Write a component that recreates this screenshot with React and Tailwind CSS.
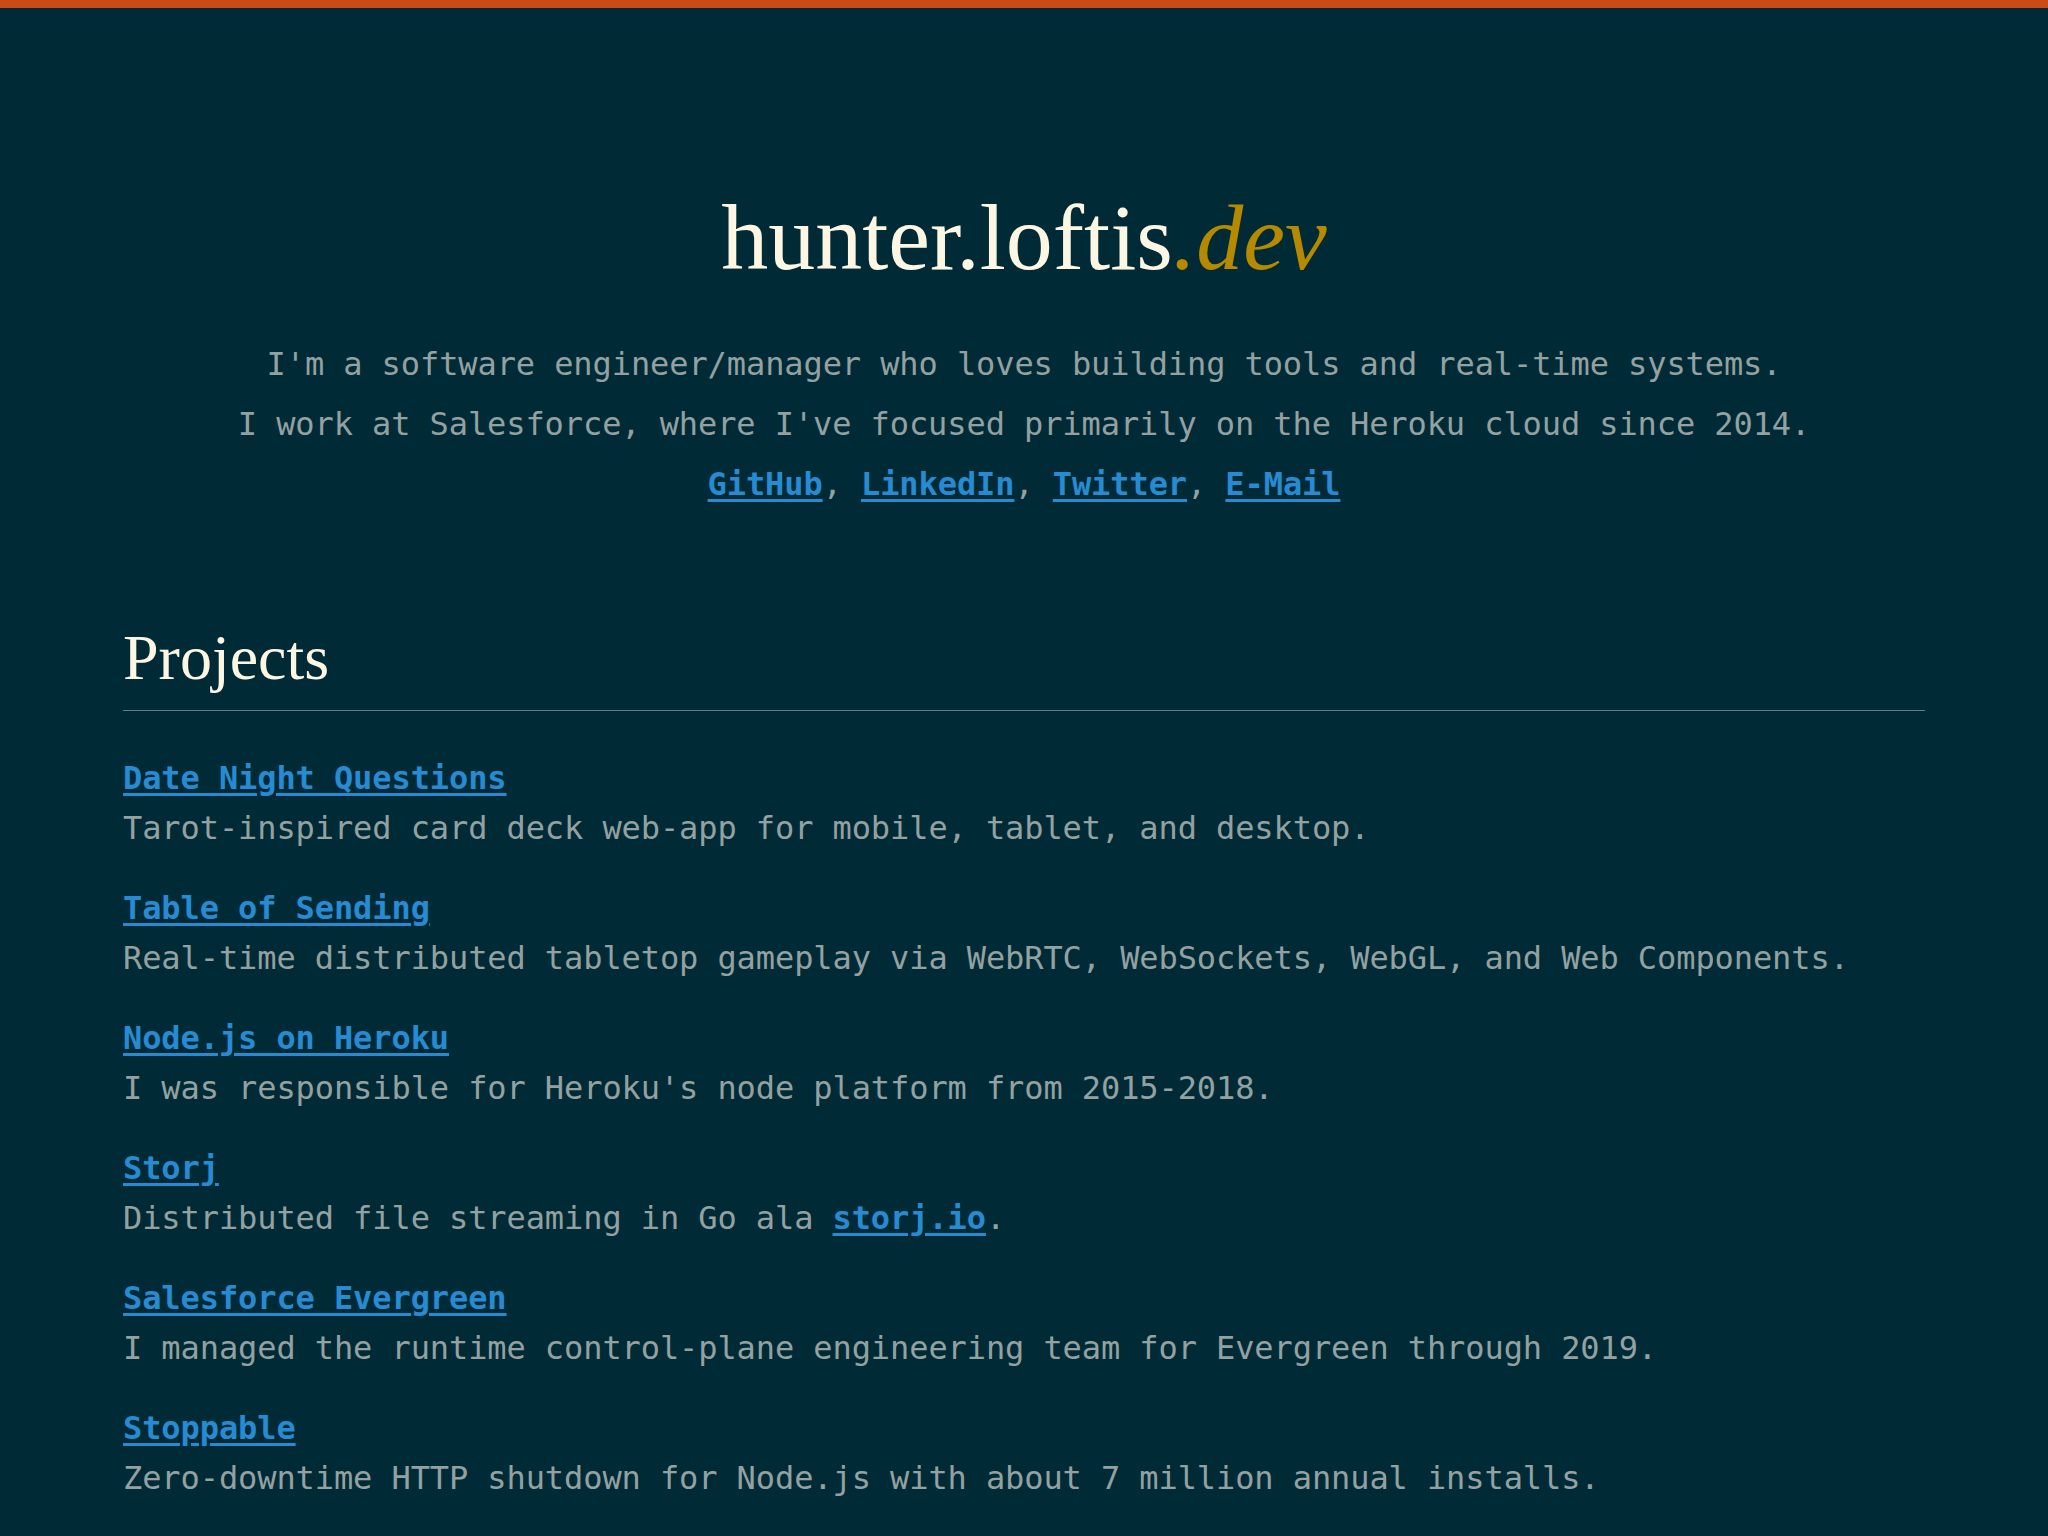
const projects = [
  {
    name: "Date Night Questions",
    desc: "Tarot-inspired card deck web-app for mobile, tablet, and desktop.",
  },
  {
    name: "Table of Sending",
    desc: "Real-time distributed tabletop gameplay via WebRTC, WebSockets, WebGL, and Web Components.",
  },
  {
    name: "Node.js on Heroku",
    desc: "I was responsible for Heroku's node platform from 2015-2018.",
  },
  {
    name: "Storj",
    desc: (
      <>
        Distributed file streaming in Go ala{" "}
        <a href="#" className="font-bold text-[#268bd2] underline underline-offset-4">
          storj.io
        </a>
        .
      </>
    ),
  },
  {
    name: "Salesforce Evergreen",
    desc: "I managed the runtime control-plane engineering team for Evergreen through 2019.",
  },
  {
    name: "Stoppable",
    desc: "Zero-downtime HTTP shutdown for Node.js with about 7 million annual installs.",
  },
];

const mono = "font-['DejaVu_Sans_Mono',monospace]";
const serif = "font-['Liberation_Serif',serif]";

function Link({ children }) {
  return (
    <a href="#" className="font-bold text-[#268bd2] underline underline-offset-4">
      {children}
    </a>
  );
}

export default function App() {
  return (
    <div className={`min-h-screen bg-[#002b36] border-t-8 border-[#cb4b16] text-[#93a1a1] tracking-[-0.09px] ${mono}`}>
      <header className="pt-[182px] text-center">
        <h1 className={`${serif} text-[94px] leading-none tracking-normal text-[#fdf6e3]`}>
          hunter.loftis<span className="italic text-[#b58900]">.dev</span>
        </h1>
        <div className="mt-[50px] text-[32px] leading-[60px]">
          <p>I'm a software engineer/manager who loves building tools and real-time systems.</p>
          <p>I work at Salesforce, where I've focused primarily on the Heroku cloud since 2014.</p>
          <p>
            <Link>GitHub</Link>, <Link>LinkedIn</Link>, <Link>Twitter</Link>, <Link>E-Mail</Link>
          </p>
        </div>
      </header>

      <main className="mx-[123px] mt-[112px] pb-16">
        <h2 className={`${serif} text-[64px] leading-none tracking-normal text-[#fdf6e3]`}>Projects</h2>
        <hr className="mt-[20px] border-t border-[#657b83]" />
        <ul className="mt-[42px] flex flex-col gap-[30px] text-[32px] leading-[50px]">
          {projects.map((p) => (
            <li key={p.name}>
              <div>
                <Link>{p.name}</Link>
              </div>
              <p>{p.desc}</p>
            </li>
          ))}
        </ul>
      </main>
    </div>
  );
}
